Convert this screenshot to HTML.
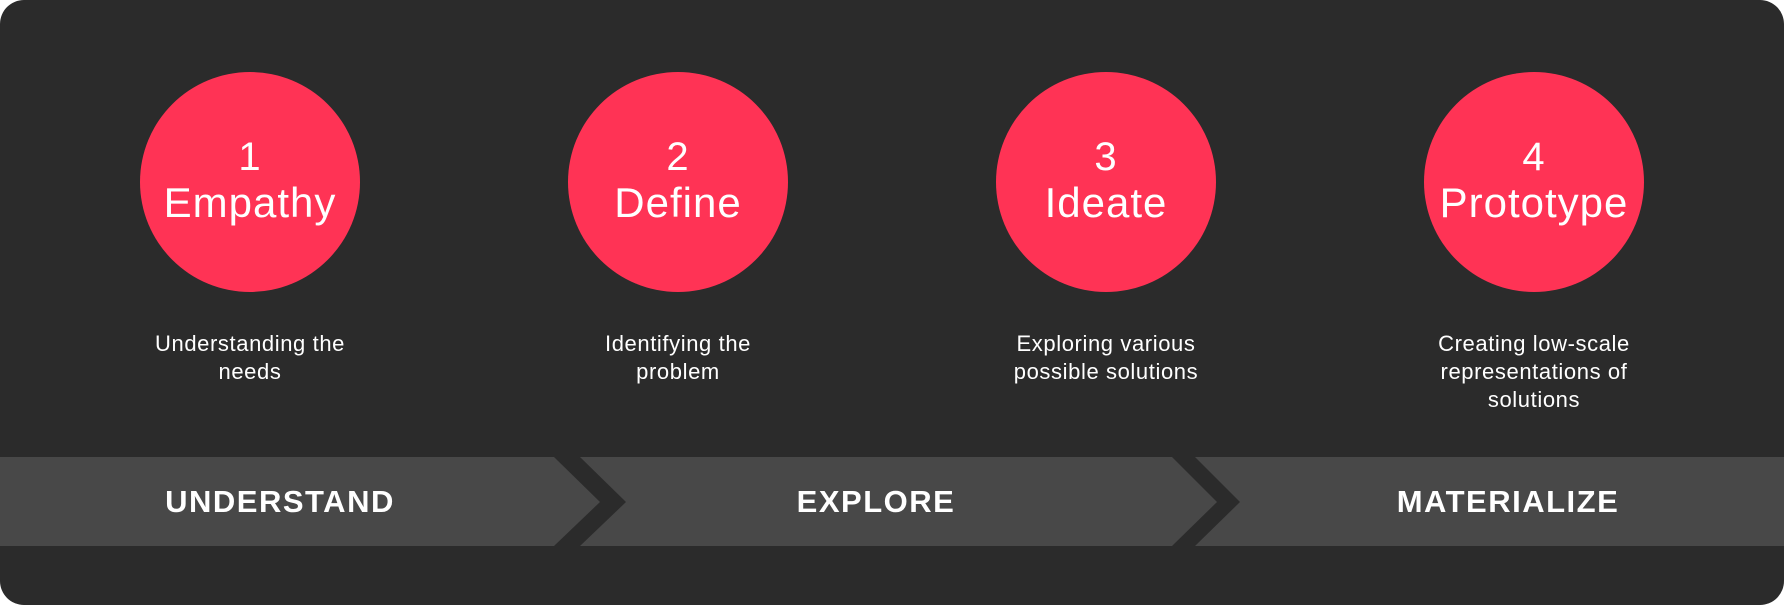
<!DOCTYPE html>
<html><head><meta charset="utf-8"><style>
html,body{margin:0;padding:0;background:#fff;}
#p{position:relative;width:1784px;height:605px;background:#2b2b2b;border-radius:24px;overflow:hidden;font-family:"Liberation Sans",sans-serif;color:#fff;}
.c{position:absolute;width:220px;height:220px;border-radius:50%;background:#ff3355;top:72px;text-align:center;}
.c .n{position:absolute;left:0;right:0;top:63px;font-size:40px;line-height:44px;letter-spacing:1px;}
.c .t{position:absolute;left:-20px;right:-20px;top:107px;font-size:42px;line-height:48px;letter-spacing:1px;}
.d{position:absolute;width:300px;top:330px;text-align:center;font-size:22px;line-height:28px;letter-spacing:0.6px;}
svg{position:absolute;left:0;top:0;}
.l{position:absolute;top:485px;font-size:31px;font-weight:bold;letter-spacing:1.5px;line-height:34px;text-align:center;width:400px;}
</style></head><body><div id="p">
<svg width="1784" height="605">
<polygon points="0,457 554,457 600,502 554,546 0,546" fill="#484848"/>
<polygon points="580,457 1172,457 1217,502 1172,546 580,546 626,502" fill="#484848"/>
<polygon points="1195,457 1784,457 1784,546 1195,546 1240,502" fill="#484848"/>
</svg>
<div class="c" style="left:140px"><div class="n">1</div><div class="t">Empathy</div></div>
<div class="c" style="left:568px"><div class="n">2</div><div class="t">Define</div></div>
<div class="c" style="left:996px"><div class="n">3</div><div class="t">Ideate</div></div>
<div class="c" style="left:1424px"><div class="n">4</div><div class="t">Prototype</div></div>
<div class="d" style="left:100px">Understanding the<br>needs</div>
<div class="d" style="left:528px">Identifying the<br>problem</div>
<div class="d" style="left:956px">Exploring various<br>possible solutions</div>
<div class="d" style="left:1384px">Creating low-scale<br>representations of<br>solutions</div>
<div class="l" style="left:80px">UNDERSTAND</div>
<div class="l" style="left:676px">EXPLORE</div>
<div class="l" style="left:1308px">MATERIALIZE</div>
</div></body></html>
